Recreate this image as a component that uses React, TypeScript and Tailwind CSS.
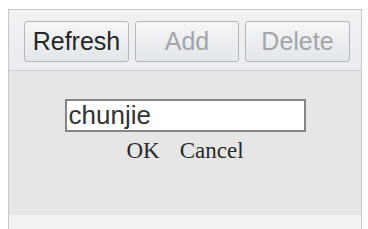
import React from 'react'

const ToolButton = ({ label, disabled, w }: { label: string; disabled?: boolean; w: string }) => (
  <button
    className={`${w} h-[41px] rounded-[3px] border border-[#b3b7bc] bg-gradient-to-b from-[#f5f6f7] to-[#e3e6e9] text-[25px] leading-none ${
      disabled ? 'text-[#a4a6a8]' : 'text-[#262626]'
    }`}
    style={{ fontFamily: '"Liberation Sans", Arial, sans-serif' }}
  >
    {label}
  </button>
)

const App = () => {
  return (
    <div className="w-[368px] h-[229px] bg-white pt-[9px] pl-[8px] overflow-hidden">
      <div className="w-[354px] h-[220px] border border-b-0 border-[#c6c8ca] flex flex-col">
        <div className="h-[61px] shrink-0 border-b border-[#c9cbcd] bg-gradient-to-b from-[#f1f2f4] to-[#e9ebee] flex items-start pt-[11px] pl-[15px] gap-[6px]">
          <ToolButton label="Refresh" w="w-[105px]" />
          <ToolButton label="Add" w="w-[104px]" disabled />
          <ToolButton label="Delete" w="w-[105px]" disabled />
        </div>
        <div className="flex-1 bg-[#e6e6e6] flex flex-col items-center pt-[28px]">
          <input
            defaultValue="chunjie"
            className="w-[241px] h-[33px] border-2 border-[#858585] bg-white pl-[2px] text-[26px] leading-[29px] text-[#333] outline-none"
            style={{ fontFamily: '"Liberation Sans", Arial, sans-serif' }}
          />
          <div
            className="mt-[6px] flex gap-[20px] text-[23px] leading-[26px] text-[#2a2a2a]"
            style={{ fontFamily: '"Liberation Serif", "Times New Roman", serif' }}
          >
            <span>OK</span>
            <span>Cancel</span>
          </div>
        </div>
        <div className="h-[14px] shrink-0 bg-[#f2f2f2]" />
      </div>
    </div>
  )
}

export default App
